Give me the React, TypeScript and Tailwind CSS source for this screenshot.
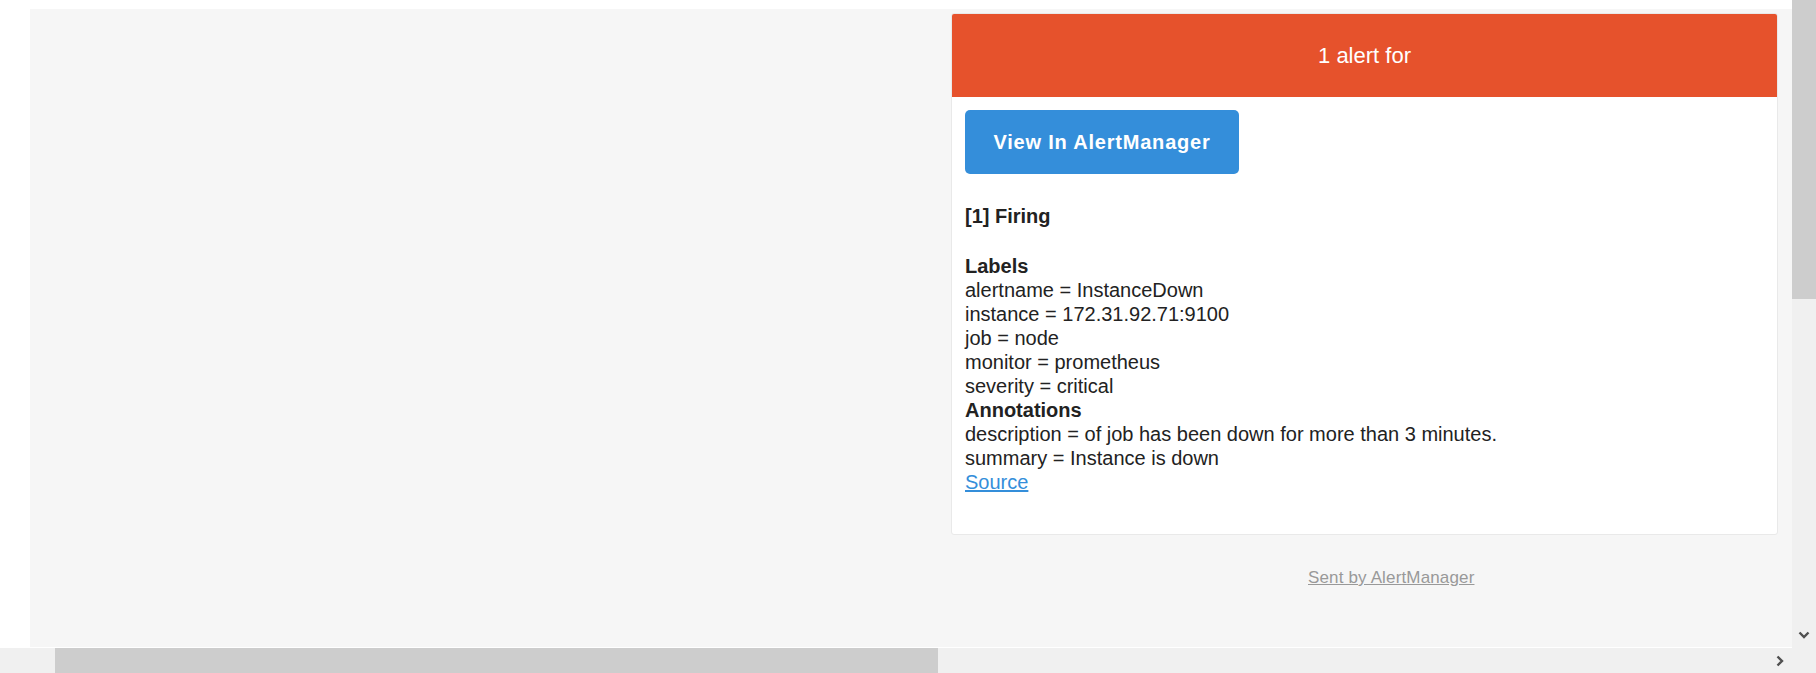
import React from "react";

const labels = [
  "alertname = InstanceDown",
  "instance = 172.31.92.71:9100",
  "job = node",
  "monitor = prometheus",
  "severity = critical",
];

const annotations = [
  "description = of job has been down for more than 3 minutes.",
  "summary = Instance is down",
];

export default function App() {
  return (
    <div
      className="w-[1816px] h-[673px] flex flex-col overflow-hidden bg-white"
      style={{ fontFamily: '"Liberation Sans", Arial, sans-serif' }}
    >
      <div className="flex h-[648px]">
        <div className="flex-1 pt-[9px] pl-[30px] pb-px">
          <div className="h-full bg-[#f6f6f6] pt-[4px] pl-[921px]">
            <div className="w-[827px] bg-white border border-[#e9e9e9] rounded-[3px] overflow-hidden">
              <div className="h-[83px] bg-[#e6522c] flex items-center justify-center text-white text-[22px]">
                1 alert for
              </div>
              <div className="px-[13px] pt-[13px] pb-[40px] text-[20px] leading-[24px] text-[#222]">
                <div className="w-[274px] h-[64px] rounded-[5px] bg-[#348eda] text-white font-bold tracking-[0.8px] flex items-center justify-center">
                  View In AlertManager
                </div>
                <div className="mt-[30px] font-bold">[1] Firing</div>
                <div className="mt-[26px] font-bold">Labels</div>
                {labels.map((l) => (
                  <div key={l}>{l}</div>
                ))}
                <div className="font-bold">Annotations</div>
                {annotations.map((l) => (
                  <div key={l}>{l}</div>
                ))}
                <div>
                  <a className="text-[#348eda] underline">Source</a>
                </div>
              </div>
            </div>
            <div className="pl-[357px] mt-[30px] text-[17px] tracking-[0.15px] text-[#999]">
              <span className="underline">Sent by AlertManager</span>
            </div>
          </div>
        </div>
        <div className="w-[24px] flex flex-col bg-[#f0f0f0]">
          <div className="h-[299px] bg-[#cdcdcd]" />
          <div className="flex-1" />
          <div className="h-[24px] flex items-center justify-center pb-[3px]">
            <svg width="12" height="8" viewBox="0 0 12 8">
              <path d="M1.5 1.5 L6 6 L10.5 1.5" fill="none" stroke="#505050" strokeWidth="2.4" />
            </svg>
          </div>
        </div>
      </div>
      <div className="flex h-[25px] bg-[#f0f0f0]">
        <div className="w-[55px]" />
        <div className="w-[883px] bg-[#cdcdcd]" />
        <div className="flex-1" />
        <div className="w-[24px] flex items-center justify-center">
          <svg width="8" height="12" viewBox="0 0 8 12">
            <path d="M1.5 1.5 L6 6 L1.5 10.5" fill="none" stroke="#505050" strokeWidth="2.4" />
          </svg>
        </div>
        <div className="w-[24px]" />
      </div>
    </div>
  );
}
